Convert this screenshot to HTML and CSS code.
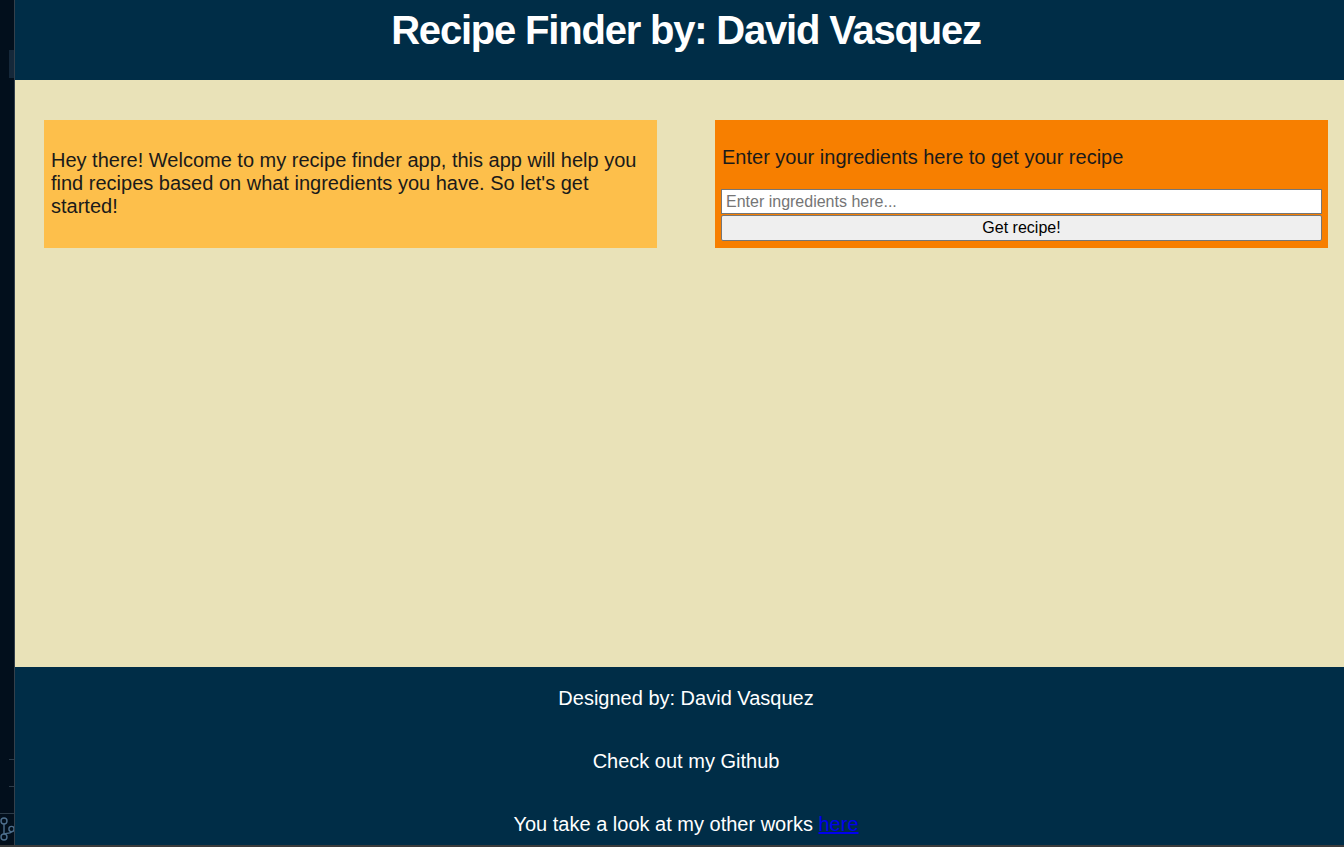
FILE: index.html
```html
<!DOCTYPE html>
<html lang="en">
<head>
<meta charset="utf-8">
<title>Recipe Finder</title>
<link rel="stylesheet" href="styles.css">
</head>
<body>
<div class="frame">
  <aside class="strip">
    <div class="strip-tab"></div>
    <div class="strip-bottom">
      <div class="tick"></div>
      <div class="tick"></div>
      <svg class="git" width="14" height="24" viewBox="0 0 14 24">
        <circle cx="4" cy="4" r="3" fill="none" stroke="#4d6e8c" stroke-width="1.4"/>
        <circle cx="4" cy="20" r="3" fill="none" stroke="#4d6e8c" stroke-width="1.4"/>
        <circle cx="11.5" cy="12" r="2.6" fill="none" stroke="#4d6e8c" stroke-width="1.4"/>
        <path d="M4 7 V17 M11.5 14.6 C11.5 17 4 16 4 17" fill="none" stroke="#4d6e8c" stroke-width="1.4"/>
      </svg>
    </div>
  </aside>
  <div class="page">
    <header class="header">
      <h1>Recipe Finder by: David Vasquez</h1>
    </header>
    <main class="main">
      <section class="card card-intro">
        <p>Hey there! Welcome to my recipe finder app, this app will help you find recipes based on what ingredients you have. So let's get started!</p>
      </section>
      <section class="card card-form">
        <p>Enter your ingredients here to get your recipe</p>
        <input class="ingredients" type="text" placeholder="Enter ingredients here...">
        <button class="get-btn" type="button">Get recipe!</button>
      </section>
    </main>
    <footer class="footer">
      <p>Designed by: David Vasquez</p>
      <p>Check out my Github</p>
      <p>You take a look at my other works <a href="#">here</a></p>
    </footer>
  </div>
</div>
<div class="bottom-line"></div>
</body>
</html>
```
FILE: styles.css
```css
html, body {
  margin: 0;
  padding: 0;
  height: 847px;
  overflow: hidden;
  font-family: "Liberation Sans", Arial, sans-serif;
  background: #002d47;
}

.frame {
  display: flex;
  height: 845px;
  overflow: hidden;
}

.strip {
  width: 14px;
  flex: none;
  background: #020f1c;
  border-right: 1px solid #34404b;
  display: flex;
  flex-direction: column;
  justify-content: space-between;
}

.strip-tab {
  margin: 50px 0 0 9px;
  width: 5px;
  height: 28px;
  background: #15283a;
}

.strip-bottom {
  display: flex;
  flex-direction: column;
  align-items: flex-end;
}

.tick {
  width: 5px;
  height: 1px;
  background: #2c3c4a;
  margin-bottom: 26px;
}

.git {
  display: block;
  margin: 0 0 4px 0;
  align-self: flex-start;
  border-top: 1px solid #2c3c4a;
  padding-top: 3px;
  width: 14px;
}

.page {
  flex: 1;
  display: flex;
  flex-direction: column;
  min-width: 0;
}

.header {
  flex: none;
  background: #002d47;
  height: 80px;
  text-align: center;
  color: #ffffff;
  padding-left: 13px;
}

.header h1 {
  margin: 0;
  padding-top: 7px;
  font-size: 40px;
  line-height: 46px;
  font-weight: bold;
  letter-spacing: -1.2px;
}

.main {
  flex: none;
  background: #e9e2b8;
  height: 587px;
  box-sizing: border-box;
  padding: 40px 16px 0 29px;
  display: flex;
  align-items: flex-start;
  gap: 58px;
}

.card {
  width: 613px;
  height: 128px;
  box-sizing: border-box;
  flex: none;
}

.card p {
  margin: 0;
  font-size: 20px;
  line-height: 23px;
  color: #1a1a1a;
}

.card-intro {
  background: #fdbf4b;
  padding: 0 20px 0 7px;
  display: flex;
  align-items: center;
}

.card-intro p {
  margin-top: -2px;
}

.card-form {
  background: #f77f00;
  padding: 26px 6px 7px 6px;
  display: flex;
  flex-direction: column;
}

.card-form p {
  padding-left: 1px;
  margin-bottom: 20px;
}

.ingredients {
  display: block;
  width: 100%;
  height: 25px;
  box-sizing: border-box;
  margin: 0 0 1px 0;
  padding: 0 4px;
  font-family: "Liberation Sans", Arial, sans-serif;
  font-size: 16px;
  border: 1px solid #767676;
  background: #ffffff;
  color: #111;
}

.ingredients::placeholder {
  color: #757575;
}

.get-btn {
  display: block;
  width: 100%;
  height: 26px;
  box-sizing: border-box;
  margin: 0;
  padding: 0;
  font-family: "Liberation Sans", Arial, sans-serif;
  font-size: 16px;
  color: #000;
  background: #efefef;
  border: 1px solid #767676;
  border-radius: 2px;
}

.footer {
  flex: none;
  background: #002d47;
  color: #ffffff;
  text-align: center;
  padding: 20px 0 0 13px;
  box-sizing: border-box;
}

.footer p {
  margin: 0 0 40px 0;
  font-size: 20px;
  line-height: 23px;
}

.footer a {
  color: #0000ee;
}

.bottom-line {
  height: 2px;
  background: #3b3b3b;
}
```
